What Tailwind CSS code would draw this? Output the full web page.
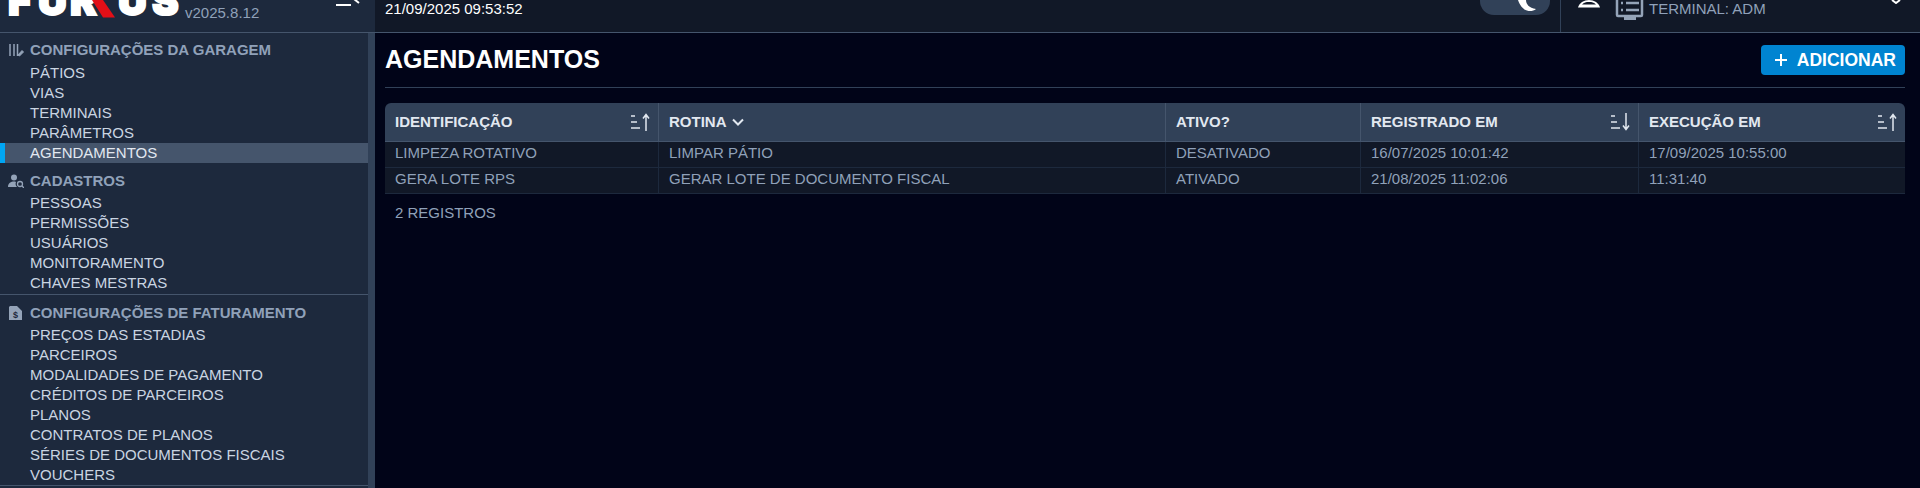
<!DOCTYPE html>
<html lang="pt-BR">
<head>
  <meta charset="UTF-8" />
  <title>Agendamentos</title>
  <script src="https://cdn.jsdelivr.net/npm/@tailwindcss/browser@4"></script>
</head>
<body class="bg-[#010418] font-['Liberation_Sans',Arial,sans-serif] text-[15px] text-slate-400 overflow-hidden">
<div class="h-[488px] overflow-hidden flex flex-col">

  <!-- Topo (a página está rolada, só a parte de baixo aparece) -->
  <header class="h-[33px] shrink-0 flex border-b border-slate-600 overflow-hidden">
    <div class="w-[375px] shrink-0 bg-slate-800 relative overflow-hidden">
      <!-- Logo -->
      <div class="absolute left-[8px] top-[-19px] flex text-white font-['Inter'] font-black text-[40px] leading-[40px] [-webkit-text-stroke:2px_#fff]">
        <span class="w-[30px]">F</span><span class="w-[32px]">U</span><span class="w-[48px]">R</span><span class="w-[34px]">U</span><span>S</span>
      </div>
      <svg class="absolute left-[85px] top-0" width="36" height="18" viewBox="0 0 36 18"><polygon points="7,0 18,0 30,17.500 18,17.500" fill="#e30f17"/></svg>
      <span class="absolute left-[185px] top-[3px] leading-[20px]">v2025.8.12</span>
      <svg class="absolute left-[336px] top-0" width="24" height="8" viewBox="0 0 24 8" fill="none" stroke="#fff" stroke-width="2"><path d="M0 5H15M18 -1 23 3"/></svg>
    </div>
    <div class="flex-1 bg-[#111827] flex items-start">
      <span class="ml-[10px] text-white leading-[17px]">21/09/2025 09:53:52</span>
      <div class="ml-auto w-[70px] h-[15px] rounded-b-[14px] bg-slate-700 relative overflow-hidden">
        <svg class="absolute left-[38px] top-0" width="20" height="12" viewBox="0 0 20 12"><path d="M0 0H8C8 4 11 8 18 9 13 13 4 12 0 0Z" fill="#fff"/></svg>
      </div>
      <div class="ml-[10px] w-[360px] h-[32px] border-l border-slate-700 relative">
        <svg class="absolute left-[17px] top-0" width="22" height="8" viewBox="0 0 22 8"><path d="M0 7.500C1 3 6 0 11 0S21 3 22 7.500Z" fill="#fff"/><path d="M4 4.500C6 2.500 8 2 11 2S16 2.500 18 4.500Z" fill="#111827"/></svg>
        <svg class="absolute left-[54px] top-0" width="30" height="21" viewBox="0 0 30 21" fill="none" stroke="#94a3b8"><path d="M2 -2V15C2 16 2 16 3 16H26C27 16 27 16 27 15V-2" stroke-width="2.500"/><path d="M9 18.500H21" stroke-width="3"/><path d="M6 3H8M11 3H24M6 10H8M11 10H24" stroke-width="2.500"/></svg>
        <span class="absolute left-[88px] top-0 leading-[18px] whitespace-nowrap">TERMINAL: ADM</span>
        <svg class="absolute left-[328px] top-0" width="14" height="4" viewBox="0 0 14 4"><path d="M3 0 7 3 11 0" fill="none" stroke="#fff" stroke-width="2"/></svg>
      </div>
    </div>
  </header>

  <div class="flex-1 flex min-h-0">
    <!-- Menu lateral -->
    <aside class="w-[368px] shrink-0 bg-slate-800 leading-[20px] text-slate-300 pt-[7px]">
      <section>
        <h2 class="h-[20px] pl-[30px] font-bold text-slate-400 relative">
          <svg class="absolute left-[9px] top-[3px]" width="15" height="14" viewBox="0 0 15 14" fill="none" stroke="#94a3b8" stroke-width="1.500"><path d="M1 1V13M5 1V13M8.500 1V13"/><path d="M9 12 13 7.500 14.500 9 10.500 13Z" fill="#94a3b8" stroke-width="1"/></svg>
          CONFIGURAÇÕES DA GARAGEM
        </h2>
        <ul class="pt-[3px]">
          <li class="pl-[30px]">PÁTIOS</li>
          <li class="pl-[30px]">VIAS</li>
          <li class="pl-[30px]">TERMINAIS</li>
          <li class="pl-[30px]">PARÂMETROS</li>
          <li class="pl-[25px] bg-slate-600 border-l-[5px] border-sky-500 text-slate-200">AGENDAMENTOS</li>
        </ul>
      </section>
      <section class="pt-[8px]">
        <h2 class="h-[20px] pl-[30px] font-bold text-slate-400 relative">
          <svg class="absolute left-[8px] top-[3px]" width="16" height="14" viewBox="0 0 16 14" fill="#94a3b8"><circle cx="6" cy="3.500" r="3"/><path d="M0 13C0 9 3 7.500 6 7.500 7.500 7.500 8 8 8 8 7 10 8 12 9 13Z"/><circle cx="12" cy="10" r="2.500" fill="none" stroke="#94a3b8" stroke-width="1.300"/><path d="M14 12 16 14" stroke="#94a3b8" stroke-width="1.300"/></svg>
          CADASTROS
        </h2>
        <ul class="pt-[2px]">
          <li class="pl-[30px]">PESSOAS</li>
          <li class="pl-[30px]">PERMISSÕES</li>
          <li class="pl-[30px]">USUÁRIOS</li>
          <li class="pl-[30px]">MONITORAMENTO</li>
          <li class="pl-[30px]">CHAVES MESTRAS</li>
        </ul>
      </section>
      <section class="mt-[1px] border-t border-slate-600 pt-[8px]">
        <h2 class="h-[20px] pl-[30px] font-bold text-slate-400 relative">
          <svg class="absolute left-[9px] top-[3px]" width="13" height="14" viewBox="0 0 13 14"><path d="M1 0H8L13 5V14H0V1Z" fill="#94a3b8"/><text x="4" y="12" font-size="9" font-weight="700" fill="#1e293b">$</text></svg>
          CONFIGURAÇÕES DE FATURAMENTO
        </h2>
        <ul class="pt-[2px]">
          <li class="pl-[30px]">PREÇOS DAS ESTADIAS</li>
          <li class="pl-[30px]">PARCEIROS</li>
          <li class="pl-[30px]">MODALIDADES DE PAGAMENTO</li>
          <li class="pl-[30px]">CRÉDITOS DE PARCEIROS</li>
          <li class="pl-[30px]">PLANOS</li>
          <li class="pl-[30px]">CONTRATOS DE PLANOS</li>
          <li class="pl-[30px]">SÉRIES DE DOCUMENTOS FISCAIS</li>
          <li class="pl-[30px]">VOUCHERS</li>
        </ul>
      </section>
      <div class="border-t border-slate-600"></div>
    </aside>
    <div class="w-[7px] shrink-0 bg-slate-700"></div>

    <!-- Conteúdo -->
    <main class="flex-1 pl-[10px] pr-[15px]">
      <div class="h-[55px] flex items-center justify-between border-b border-slate-700">
        <h1 class="text-[25px] font-bold text-white">AGENDAMENTOS</h1>
        <button class="w-[144px] h-[30px] rounded bg-sky-600 text-white font-bold text-[17.5px] flex items-center justify-end pr-[9px] gap-[9px]">
          <svg width="14" height="14" viewBox="0 0 14 14" stroke="#fff" stroke-width="2"><path d="M7 1V13M1 7H13"/></svg>
          ADICIONAR
        </button>
      </div>

      <table class="mt-[15px] w-[1520px] table-fixed border-separate border-spacing-0">
        <colgroup>
          <col class="w-[274px]" /><col class="w-[507px]" /><col class="w-[195px]" /><col class="w-[278px]" /><col class="w-[266px]" />
        </colgroup>
        <thead>
          <tr class="h-[39px] bg-slate-700 text-slate-200 font-bold text-left">
            <th class="px-[10px] border-b border-r border-slate-600 rounded-tl-md">
              <div class="flex items-center justify-between">IDENTIFICAÇÃO
                <svg class="-mr-[3px]" width="22" height="18" viewBox="0 0 22 18" fill="none" stroke="currentColor" stroke-width="1.500"><path d="M2 3H6M2 9H8M2 15H11M17 18V2M14 5.500 17 1.500 20 5.500"/></svg>
              </div>
            </th>
            <th class="px-[10px] border-b border-r border-slate-600">
              <div class="flex items-center gap-[4px]">ROTINA
                <svg width="14" height="14" viewBox="0 0 14 14" fill="none" stroke="currentColor" stroke-width="2"><path d="M2 4.500 7 9.500 12 4.500"/></svg>
              </div>
            </th>
            <th class="px-[10px] border-b border-r border-slate-600">ATIVO?</th>
            <th class="px-[10px] border-b border-r border-slate-600">
              <div class="flex items-center justify-between">REGISTRADO EM
                <svg class="-mr-[3px]" width="22" height="18" viewBox="0 0 22 18" fill="none" stroke="currentColor" stroke-width="1.500"><path d="M2 3H6M2 9H8M2 15H11M17 0V16M14 12.500 17 16.500 20 12.500"/></svg>
              </div>
            </th>
            <th class="px-[10px] border-b border-slate-600 rounded-tr-md">
              <div class="flex items-center justify-between">EXECUÇÃO EM
                <svg class="-mr-[3px]" width="22" height="18" viewBox="0 0 22 18" fill="none" stroke="currentColor" stroke-width="1.500"><path d="M2 3H6M2 9H8M2 15H11M17 18V2M14 5.500 17 1.500 20 5.500"/></svg>
              </div>
            </th>
          </tr>
        </thead>
        <tbody class="bg-[#111827]">
          <tr class="h-[26px]">
            <td class="px-[10px] pb-[2px] border-b border-r border-slate-800">LIMPEZA ROTATIVO</td>
            <td class="px-[10px] pb-[2px] border-b border-r border-slate-800">LIMPAR PÁTIO</td>
            <td class="px-[10px] pb-[2px] border-b border-r border-slate-800">DESATIVADO</td>
            <td class="px-[10px] pb-[2px] border-b border-r border-slate-800">16/07/2025 10:01:42</td>
            <td class="px-[10px] pb-[2px] border-b border-slate-800">17/09/2025 10:55:00</td>
          </tr>
          <tr class="h-[26px]">
            <td class="px-[10px] pb-[2px] border-b border-r border-slate-800">GERA LOTE RPS</td>
            <td class="px-[10px] pb-[2px] border-b border-r border-slate-800">GERAR LOTE DE DOCUMENTO FISCAL</td>
            <td class="px-[10px] pb-[2px] border-b border-r border-slate-800">ATIVADO</td>
            <td class="px-[10px] pb-[2px] border-b border-r border-slate-800">21/08/2025 11:02:06</td>
            <td class="px-[10px] pb-[2px] border-b border-slate-800">11:31:40</td>
          </tr>
        </tbody>
      </table>

      <p class="mt-[9px] pl-[10px] leading-[20px]">2 REGISTROS</p>
    </main>
  </div>
</div>
</body>
</html>
